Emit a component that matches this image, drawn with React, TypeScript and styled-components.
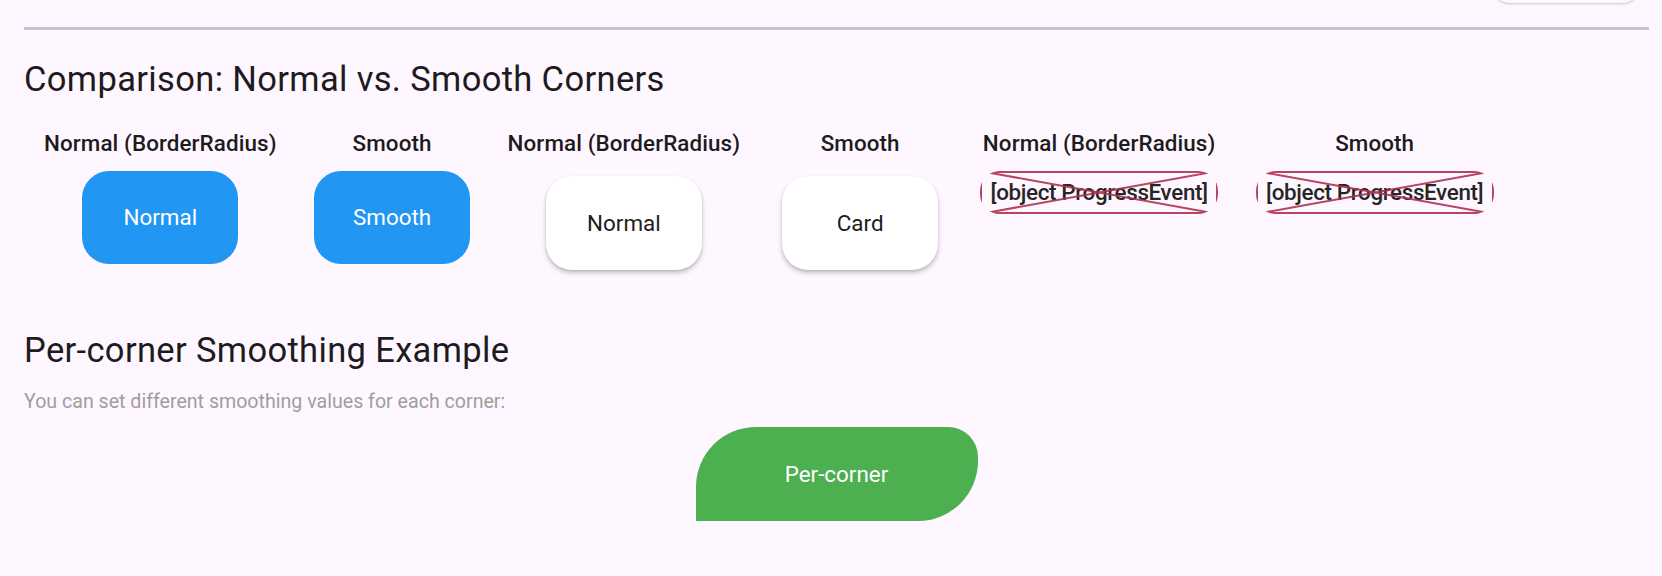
import React from "react";
import styled, { createGlobalStyle } from "styled-components";

const GlobalStyle = createGlobalStyle`
  html, body {
    margin: 0;
    padding: 0;
    background: #fef7ff;
  }
  body {
    font-family: Roboto, "Noto Sans", "Liberation Sans", sans-serif;
    color: #1d1b20;
  }
`;

type Sample = {
  label: string;
  kind: "blue" | "card" | "error";
  text: string;
};

const SAMPLES: Sample[] = [
  { label: "Normal (BorderRadius)", kind: "blue", text: "Normal" },
  { label: "Smooth", kind: "blue", text: "Smooth" },
  { label: "Normal (BorderRadius)", kind: "card", text: "Normal" },
  { label: "Smooth", kind: "card", text: "Card" },
  { label: "Normal (BorderRadius)", kind: "error", text: "[object ProgressEvent]" },
  { label: "Smooth", kind: "error", text: "[object ProgressEvent]" },
];

// the broken image placeholder: outline + cross, clipped by the rounded box
const BrokenImage = ({ text }: { text: string }) => {
  return (
    <ErrorBox>
      <ErrorText>{text}</ErrorText>
      <ErrorLines viewBox="0 0 238 43" preserveAspectRatio="none">
        <rect x="1" y="1" width="236" height="41" fill="none" />
        <line x1="0" y1="0" x2="238" y2="43" />
        <line x1="238" y1="0" x2="0" y2="43" />
      </ErrorLines>
    </ErrorBox>
  );
};

const App: React.FC = () => {
  return (
    <>
      <GlobalStyle />
      <Page>
        <TopBar>
          <GhostButton />
        </TopBar>
        <Divider />
        <Heading>Comparison: Normal vs. Smooth Corners</Heading>
        <ComparisonRow>
          {SAMPLES.map((s, i) => (
            <SampleColumn key={i}>
              <SampleLabel>{s.label}</SampleLabel>
              {s.kind === "blue" && <BlueBox>{s.text}</BlueBox>}
              {s.kind === "card" && <CardBox>{s.text}</CardBox>}
              {s.kind === "error" && <BrokenImage text={s.text} />}
            </SampleColumn>
          ))}
        </ComparisonRow>
        <Heading $top={54}>Per-corner Smoothing Example</Heading>
        <Caption>You can set different smoothing values for each corner:</Caption>
        <Center>
          <GreenBox>Per-corner</GreenBox>
        </Center>
      </Page>
    </>
  );
};

export default App;

const Page = styled.div`
  height: 576px;
  overflow: hidden;
  padding: 0 13px 0 24px;
  box-sizing: border-box;
`;

const TopBar = styled.div`
  display: flex;
  justify-content: flex-end;
  margin-top: -36px;
  padding-right: 7px;
`;

const GhostButton = styled.div`
  width: 152px;
  height: 40px;
  box-sizing: border-box;
  border: 1px solid #d9d3dc;
  border-radius: 20px;
  background: #fdf8fd;
  box-shadow: 0 1px 2px rgba(0, 0, 0, 0.08);
`;

const Divider = styled.div`
  height: 3px;
  margin-top: 23px;
  background: #cac4d0;
`;

const Heading = styled.h2<{ $top?: number }>`
  margin: ${({ $top }) => $top ?? 29}px 0 0;
  font-size: 34.5px;
  line-height: 40px;
  font-weight: 400;
  letter-spacing: 0.35px;
  color: #1d1b20;
`;

const ComparisonRow = styled.div`
  display: flex;
  align-items: flex-start;
  gap: 37.5px;
  margin-top: 31px;
  padding-left: 20px;
`;

const SampleColumn = styled.div`
  display: flex;
  flex-direction: column;
  align-items: center;
  gap: 13.5px;
`;

const SampleLabel = styled.div`
  font-size: 22.4px;
  line-height: 27px;
  font-weight: 500;
  letter-spacing: 0.1px;
  color: #1d1b20;
  white-space: nowrap;
`;

const BlueBox = styled.div`
  width: 156px;
  height: 93px;
  border-radius: 27px;
  background: #2196f3;
  color: #ffffff;
  display: flex;
  align-items: center;
  justify-content: center;
  font-size: 22.4px;
`;

const CardBox = styled.div`
  width: 156px;
  height: 94px;
  margin: 5.6px 4.5px;
  border-radius: 26px;
  background: #ffffff;
  color: #1d1b20;
  display: flex;
  align-items: center;
  justify-content: center;
  font-size: 22.4px;
  box-shadow: 0 3px 5px rgba(0, 0, 0, 0.22), 0 1px 2px rgba(0, 0, 0, 0.1);
`;

const ErrorBox = styled.div`
  position: relative;
  width: 238px;
  height: 43px;
  border-radius: 20px;
  overflow: hidden;
  display: flex;
  align-items: center;
  justify-content: center;
`;

const ErrorText = styled.span`
  font-size: 22.4px;
  line-height: 27px;
  font-weight: 500;
  letter-spacing: -0.35px;
  color: #262626;
  white-space: nowrap;
`;

const ErrorLines = styled.svg`
  position: absolute;
  inset: 0;
  width: 100%;
  height: 100%;
  stroke: #b0304f;
  stroke-width: 2;
  opacity: 0.9;
`;

const Caption = styled.p`
  margin: 20px 0 0;
  font-size: 19.6px;
  line-height: 24px;
  letter-spacing: 0;
  color: #9e9e9e;
`;

const Center = styled.div`
  display: flex;
  justify-content: center;
  margin-top: 13px;
`;

const GreenBox = styled.div`
  width: 282px;
  height: 94px;
  background: #4caf50;
  color: #ffffff;
  border-radius: 60px 30px 60px 0;
  display: flex;
  align-items: center;
  justify-content: center;
  font-size: 22.4px;
`;
